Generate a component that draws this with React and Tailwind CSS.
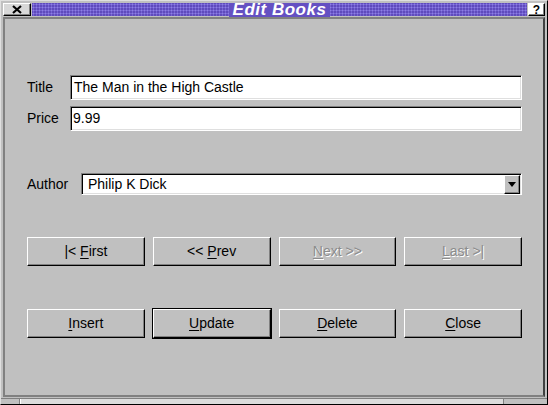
const sunken =
  'bg-white border border-t-[#808080] border-l-[#808080] border-b-white border-r-white shadow-[inset_1px_1px_0_#000,inset_-1px_-1px_0_#dfdfdf]';

const raised =
  'bg-[#c0c0c0] border border-t-white border-l-white border-b-black border-r-black shadow-[inset_-1px_-1px_0_#808080]';

function Key({ children }) {
  return <span className="underline underline-offset-[2px] decoration-1">{children}</span>;
}

function Button({ children, disabled, isDefault }) {
  return (
    <div
      className={
        raised +
        ' h-[29px] flex items-center justify-center text-[14px] ' +
        (disabled ? 'text-[#8c8c8c] [text-shadow:1px_1px_0_#ffffff]' : 'text-black') +
        (isDefault ? ' outline outline-1 outline-black' : '')
      }
    >
      <span>{children}</span>
    </div>
  );
}

export default function App() {
  return (
    <div
      className="w-[548px] h-[405px] bg-[#c0c0c0] border border-t-[#dfdfdf] border-l-[#dfdfdf] border-r-black border-b-black flex flex-col"
      style={{ fontFamily: '"Liberation Sans", Arial, sans-serif' }}
    >
      {/* title bar */}
      <div className="flex h-[13px] mt-[2px] mx-[2px] gap-[1px]">
        <div className={raised + ' w-[28px] flex items-center justify-center bg-[#d8d8d8]'}>
          <svg width="10" height="9" viewBox="0 0 10 9">
            <path d="M1 1 L9 8 M9 1 L1 8" stroke="#000" strokeWidth="2.2" />
          </svg>
        </div>
        <div className="flex-1 bg-[#5f4bbd] bg-[radial-gradient(#8d7ee6_0.9px,transparent_1.1px)] bg-[size:3px_3px] flex items-center justify-center">
          <span className="bg-[#6450c2] px-[4px] text-white italic font-semibold text-[17px] leading-[14px] tracking-[0.5px]">
            Edit Books
          </span>
        </div>
        <div className={raised + ' w-[17px] flex items-center justify-center text-[12px] font-bold leading-none bg-white'}>
          ?
        </div>
      </div>

      {/* content */}
      <div className="mt-[1px] mx-[2px] flex-1 border-2 border-t-[#808080] border-l-[#808080] border-b-[#808080] border-r-[#404040] flex flex-col pl-[22px] pr-[21px] pt-[56px] text-[14px]">
        <div className="flex items-center h-[25px]">
          <span className="w-[43px]">Title</span>
          <div className={sunken + ' flex-1 h-full flex items-center pl-[3px]'}>The Man in the High Castle</div>
        </div>
        <div className="flex items-center h-[25px] mt-[6px]">
          <span className="w-[43px]">Price</span>
          <div className={sunken + ' flex-1 h-full flex items-center pl-[2px]'}>9.99</div>
        </div>

        <div className="flex items-center h-[22px] mt-[42px]">
          <span className="w-[54px]">Author</span>
          <div className={sunken + ' flex-1 h-full flex items-center pl-[6px] pr-[1px]'}>
            <span className="flex-1">Philip K Dick</span>
            <div className={raised + ' w-[16px] h-[19px] flex items-center justify-center'}>
              <svg width="8" height="5" viewBox="0 0 8 5">
                <path d="M0 0 H8 L4 5 Z" fill="#000" />
              </svg>
            </div>
          </div>
        </div>

        <div className="grid grid-cols-4 gap-x-[8px] mt-[42px]">
          <Button>
            |&lt; <Key>F</Key>irst
          </Button>
          <Button>
            &lt;&lt; <Key>P</Key>rev
          </Button>
          <Button disabled>
            <Key>N</Key>ext &gt;&gt;
          </Button>
          <Button disabled>
            <Key>L</Key>ast &gt;|
          </Button>
        </div>

        <div className="grid grid-cols-4 gap-x-[8px] mt-[43px]">
          <Button>
            <Key>I</Key>nsert
          </Button>
          <Button isDefault>
            <Key>U</Key>pdate
          </Button>
          <Button>
            <Key>D</Key>elete
          </Button>
          <Button>
            <Key>C</Key>lose
          </Button>
        </div>
      </div>

      {/* resize bar */}
      <div className="flex h-[6px] mt-[1px] border-t border-[#808080]">
        <div className="w-[19px] bg-[#c0c0c0] border-r border-[#808080]" />
        <div className="flex-1 bg-[#dcdcdc] border-l border-white" />
        <div className="w-[44px] bg-[#c0c0c0] border-l border-[#808080]" />
      </div>
    </div>
  );
}
